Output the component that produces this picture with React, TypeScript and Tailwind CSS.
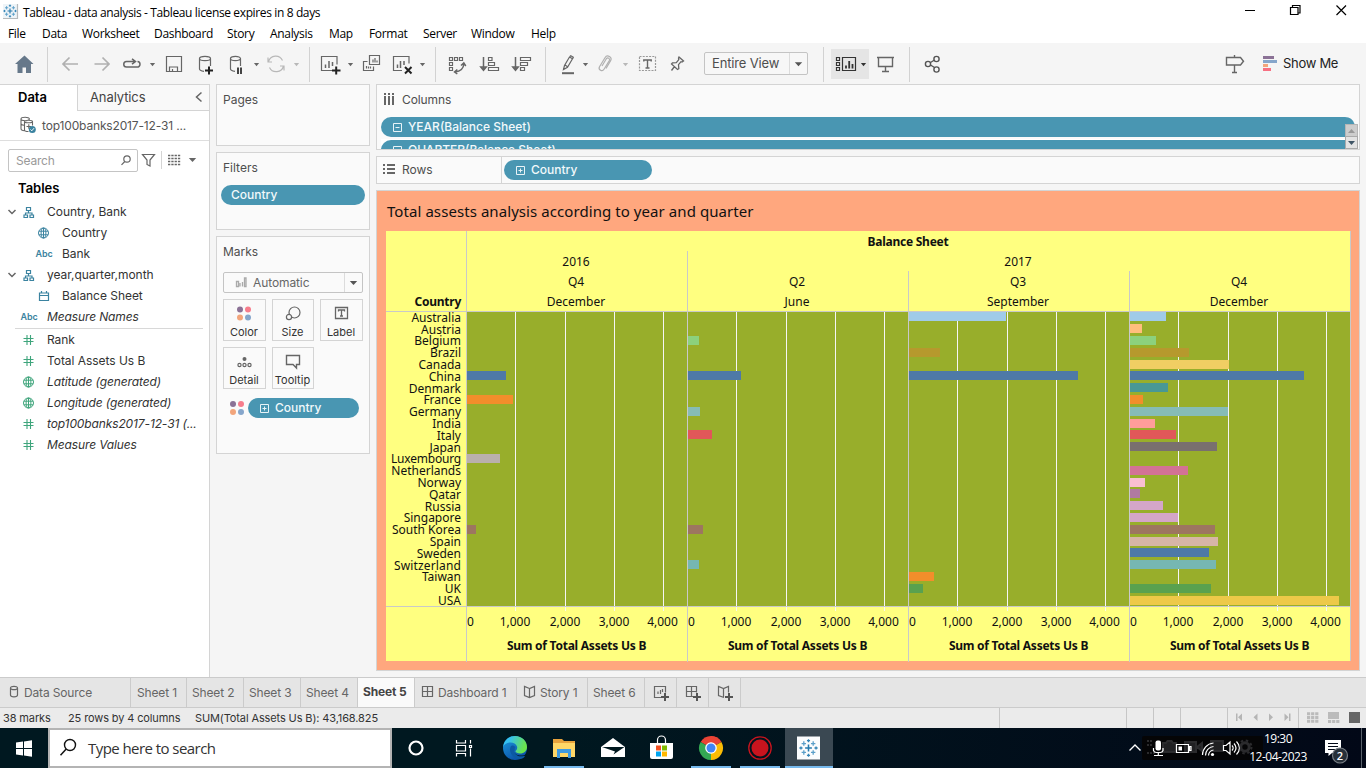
import React from "react";

type Kids = { children?: React.ReactNode };

/** Drawing whose user units are window coordinates. */
function Ico({ x, y, w, h, children, c = "#666666" }: Kids & { x: number; y: number; w: number; h: number; c?: string }) {
  return (
    <svg className="block shrink-0 overflow-visible" width={w} height={h} viewBox={`${x} ${y} ${w} ${h}`} fill="none" stroke={c} strokeWidth={1.2}>
      {children}
    </svg>
  );
}

const Caret = ({ x, y = 63, c = "#666666" }: { x: number; y?: number; c?: string }) => (
  <path d={`M${x - 2.6} ${y}h5.2l-2.6 3.2z`} fill={c} stroke="none" />
);

const Sep = () => <div className="mt-1 h-[35px] w-px shrink-0 bg-[#d2d2d2]" />;

function TableauMark({ x, y, s = 1 }: { x: number; y: number; s?: number }) {
  const plus = (cx: number, cy: number, r: number) => `M${cx - r} ${cy}h${2 * r}M${cx} ${cy - r}v${2 * r}`;
  return (
    <g transform={`translate(${x} ${y}) scale(${s})`} strokeWidth={1}>
      <path d={plus(0, 0, 2.6)} stroke="#2479ad" strokeWidth={1.2} />
      <path d={plus(-3.6, -3.4, 1.7) + plus(3.6, 3.4, 1.7) + plus(3.6, -3.4, 1.7) + plus(-3.6, 3.4, 1.7)} stroke="#5b9fc9" />
      <path d={plus(0, -5.6, 1.2) + plus(0, 5.6, 1.2) + plus(-5.8, 0, 1.2) + plus(5.8, 0, 1.2)} stroke="#3384b5" />
    </g>
  );
}

function TitleBar() {
  return (
    <header className="flex h-6 items-center bg-white text-black">
      <Ico x={0} y={0} w={23} h={24}>
        <path d="M3 4h15v14.500h-15z" fill="#eef4f8" stroke="none" />
        <path d="M3 18.500h14.500v-14.500" stroke="#b5babd" />
        <TableauMark x={10} y={11} s={0.95} />
      </Ico>
      <span className="pt-px font-['Open_Sans'] text-[12px] tracking-[-0.37px]">Tableau - data analysis - Tableau license expires in 8 days</span>
      <div className="grow" />
      <Ico x={1240} y={0} w={126} h={24} c="#000">
        <path d="M1245 10.5h10M1336.5 5.5l9.5 9.5M1346 5.500l-9.500 9.500" />
        <path d="M1290.500 7.500h7.500v7h-7.500zM1292.500 7.500v-2h7.500v7.500h-2" />
      </Ico>
    </header>
  );
}

function MenuBar() {
  return (
    <nav className="flex h-[19px] items-center bg-white pl-2 font-['Open_Sans'] text-[12px] tracking-[-0.32px] text-black">
      <span className="w-[34px]">File</span>
      <span className="w-10">Data</span>
      <span className="w-[72px]">Worksheet</span>
      <span className="w-[73px]">Dashboard</span>
      <span className="w-[43px]">Story</span>
      <span className="w-[59px]">Analysis</span>
      <span className="w-10">Map</span>
      <span className="w-[54px]">Format</span>
      <span className="w-12">Server</span>
      <span className="w-[60px]">Window</span>
      <span>Help</span>
    </nav>
  );
}

function Toolbar() {
  return (
    <div className="flex h-[41px] bg-[#f5f5f5] text-[#333]">
      <Ico x={0} y={43} w={47} h={41}>
        <path d="M24.500 55.500l9 8.500h-2.500v9h-5v-5.500h-3.500v5.500h-5v-9h-2.500z" fill="#66788a" stroke="none" />
      </Ico>
      <Sep />
      <Ico x={48} y={43} w={261} h={41}>
        <path d="M78 64H63M69.500 57.500L63 64l6.500 6.500M94.500 64H109M102.500 57.500l6.500 6.500-6.500 6.500" stroke="#b0b0b0" strokeWidth={1.7} />
        <path d="M135 61.500h-8.500a2.700 2.700 0 0 0 0 5.500h10.500a2.700 2.700 0 0 0 3-2.700c0-1.300-1-2.500-2.500-2.700M132 58.800l3.500 2.700-3.500 2.700" strokeWidth={1.5} />
        <Caret x={152.500} />
        <path d="M166.500 56.500h15v15h-15zM169.500 71.500v-4.500h8v4.500M172.500 69v2.500" />
        <path d="M199.500 58.500v10.500c0 1.300 2 2 4.500 2.300M210.500 58.500v7.500M199.500 58.500a5.500 2.200 0 1 1 11 0a5.500 2.200 0 1 1-11 0" />
        <path d="M205 70.500h8M209 66.500v8" stroke="#222" strokeWidth={2} />
        <path d="M230.500 58.500v10.500c0 1.300 2 2 4.500 2.300M240.500 58.500v7.500M230.500 58.500a5 2.200 0 1 1 10 0a5 2.200 0 1 1-10 0" />
        <path d="M238 67.500v6.500M241 67.500v6.500" stroke="#444" strokeWidth={2} />
        <Caret x={256.500} />
        <path d="M268.500 61.500a7.500 7.500 0 0 1 14-1M283.500 66a7.500 7.500 0 0 1-14 1.500M268 57.500v4.500h4M284 70.500v-4.500h-4" stroke="#b8b8b8" />
        <Caret x={296.500} c="#b8b8b8" />
      </Ico>
      <Sep />
      <Ico x={310} y={43} w={125} h={41}>
        <path d="M332 70.500h-10.500v-14h15.500v8" />
        <path d="M325.500 68v-3.500M329 68v-7M332.500 66v-4" strokeWidth={1.5} />
        <path d="M332 70.500h8.500M336.200 66.500v8" stroke="#222" strokeWidth={2} />
        <Caret x={350.500} />
        <path d="M369.500 55.500h10v9h-10zM367.500 61.500h-4v9h10v-4M373 62.500v-3M375 62.500v-4.500M377 62.500v-2M366.500 68.500v-2.500M368.500 68.500v-2M370.500 68.500v-2" />
        <path d="M402 70.500h-8.500v-14h15.500v7" />
        <path d="M397.500 68v-3.500M400.500 68v-7M404 65v-4" strokeWidth={1.500} />
        <path d="M405 67l6.500 6.500M411.500 67l-6.500 6.500" stroke="#222" strokeWidth={2} />
        <Caret x={422.500} />
      </Ico>
      <Sep />
      <Ico x={436} y={43} w={109} h={41}>
        <path d="M449.500 57.500h3v3h-3zM454.500 57.500h3v3h-3zM459.500 57.500h3v3h-3zM449.500 62.500h3v3h-3zM449.500 67.500h3v3h-3z" />
        <path d="M455 72c5-.5 8.500-3.500 8.800-8M457.300 69.500L454.500 72l2.800 2M461 65.500l2.800-2.500 2 3" strokeWidth={1.500} />
        <path d="M483.500 57v12M480.800 67l2.700 3.300 2.700-3.300zM515.500 57v12M512.800 67l2.700 3.300 2.700-3.300z" strokeWidth={1.500} />
        <path d="M488.500 57.500h3.500v3h-3.500zM488.500 62.500h6v3h-6zM488.500 67.500h10v3h-10zM520.500 57.500h10v3h-10zM520.500 62.500h7v3h-7zM520.500 67.500h4v3h-4z" />
      </Ico>
      <Sep />
      <Ico x={546} y={43} w={158} h={41}>
        <path d="M563.500 69.500l1-4 5-8.500 3 1.800-5 8.500zM565 65l3 2M570 56.500l.8-.8 2.500 1.500-.5 1.200" />
        <path d="M562 73.200h12" strokeWidth={2} />
        <Caret x={585.500} />
        <path d="M602 66l4.500-7.500a1.800 1.800 0 0 1 3 1.800l-5.500 9a2.600 2.600 0 0 1-4.500-2.600l5.500-9a3.200 3.200 0 0 1 5.500 3.300l-4.500 7.500" stroke="#b0b0b0" />
        <Caret x={625.500} c="#b8b8b8" />
        <rect x={639.500} y={56.500} width={16} height={14} stroke="#999" strokeDasharray="2 1.200" />
        <path d="M643.800 61.500v-1.500h7.400v1.500M647.500 60v8M645.500 68h4" stroke="#666" strokeWidth={1.400} />
        <path d="M679 57l4.500 4-1.500 1-1-.3-2.500 3 .3 4-1.300.8-6-5.500 1-1.200 3.800-.2 2.500-3-.3-1.500zM674.500 66.500l-3 4" strokeWidth={1.300} />
      </Ico>
      <div className="mt-[9px] flex h-[23px] w-[104px] shrink-0 items-center rounded-[2px] border border-[#c4c4c4] bg-[#f7f7f7]">
        <span className="w-[84px] pl-[7px] font-['Inter'] text-[13px] tracking-[-0.15px] text-[#4e4e4e]">Entire View</span>
        <span className="h-full w-px bg-[#dcdcdc]" />
        <Ico x={790} y={53} w={17} h={21}><path d="M794.800 62.200h7.400l-3.700 4z" fill="#555" stroke="none" /></Ico>
      </div>
      <div className="w-[15px]" />
      <Sep />
      <div className="ml-[7px] mt-1.5 h-[30px] w-[38px] bg-[#e5e5e5]">
        <Ico x={831} y={49} w={38} h={30} c="#333">
          <path d="M836.500 57.500h3v3h-3zM836.500 62.500h3v3h-3zM836.500 67.500h3v3h-3zM842.500 57.500h13v13h-13z" />
          <path d="M846 68.500v-3M849.200 68.500v-7.500M852.500 68.500v-4.500" strokeWidth={1.800} />
          <Caret x={863.500} c="#333" />
        </Ico>
      </div>
      <Ico x={869} y={43} w={40} h={41}>
        <path d="M877 57.500h17M878.500 57.500v9h14v-9M885.500 67v4.500M882 71.500h7" strokeWidth={1.400} />
      </Ico>
      <Sep />
      <Ico x={910} y={43} w={40} h={41} c="#555">
        <path d="M930.500 62.500l4-2.500M930.500 65l4 2.500" strokeWidth={1.400} />
        <circle cx={928} cy={64} r={2.600} strokeWidth={1.400} /><circle cx={936.500} cy={59} r={2.600} strokeWidth={1.400} /><circle cx={936.500} cy={69.500} r={2.600} strokeWidth={1.400} />
      </Ico>
      <div className="grow" />
      <Ico x={1220} y={43} w={63} h={41}>
        <path d="M1226.500 57.500h14l3 3.700-3 3.800h-14zM1234.500 55v2.500M1234.500 65v7M1232 72.500h5" strokeWidth={1.400} />
        <g stroke="none">
          <path d="M1263 56h11v3h-11z" fill="#8b7296" /><path d="M1263 60h14v3h-14z" fill="#86a6cb" />
          <path d="M1263 64h5v3h-5z" fill="#f2a57c" /><path d="M1263 68h8v3h-8z" fill="#f77082" />
        </g>
      </Ico>
      <div className="w-[83px] pt-[11px] font-['Inter'] text-[13px] leading-[18px] tracking-[-0.3px] text-[#222]">Show Me</div>
    </div>
  );
}

type Kind = "tree" | "globe" | "abc" | "cal" | "num";

function FieldIcon({ kind, green }: { kind: Kind; green?: boolean }) {
  const c = green ? "#3fa57c" : "#3b83a0";
  if (kind === "abc") return <span className="w-5 text-center text-[9px] font-semibold tracking-[-0.1px] text-[#3b83a0]">Abc</span>;
  return (
    <Ico x={-10} y={-8} w={20} h={16} c={c}>
      {kind === "tree" && <path d="M-2.500-4.500h4v3h-4zM-.5-1.500v2.500M-3.500 3v-2h6.500v2M-5 3h3.500v2.500h-3.500zM1 3h3.500v2.500h-3.500z" />}
      {kind === "globe" && <path d="M-.5-5a5 5 0 1 0 0 10a5 5 0 1 0 0-10M-.5-5a2.400 5 0 1 0 0 10a2.400 5 0 1 0 0-10M-5-1.800h9M-5 1.800h9M-.5-5v10" strokeWidth={1} />}
      {kind === "cal" && <path d="M-4.500-3h9v7.500h-9zM-4.500-.5h9M-2.500-5v2M2.500-5v2" />}
      {kind === "num" && <path d="M-5.500-1.500h10M-5.500 1.500h10M-2-5v10M1.500-5v10" strokeWidth={1.100} />}
    </Ico>
  );
}

function Field({ kind, green, italic, child, open, children }: Kids & { kind: Kind; green?: boolean; italic?: boolean; child?: boolean; open?: boolean }) {
  return (
    <div className={`flex h-[21px] items-center ${child ? "pl-[34px]" : open ? "pl-[6px]" : "pl-[19px]"}`}>
      {open && <Ico x={0} y={0} w={13} h={8}><path d="M2.500 2l3.500 3.500L9.500 2" strokeWidth={1.500} /></Ico>}
      <FieldIcon kind={kind} green={green} />
      <span className={`whitespace-nowrap pl-2 text-[12px] text-[#333] ${italic ? "italic tracking-[-0.12px]" : "tracking-[-0.04px]"}`}>{children}</span>
    </div>
  );
}

function DataPane() {
  return (
    <aside className="flex w-[210px] shrink-0 flex-col border-r border-t border-[#d4d4d4] bg-white font-['Inter']">
      <div className="flex h-[26px] text-[13px]">
        <div className="w-[77px] pt-[3px] pl-[18px] font-semibold leading-[19px] text-black">Data</div>
        <div className="flex grow items-start border-b border-l border-[#d4d4d4] bg-[#f9f9f9] pt-[3px] pl-3 leading-[19px] text-[#444]">
          <span className="w-[103px] tracking-[-0.1px]">Analytics</span>
          <Ico x={193} y={88} w={12} h={19}><path d="M201.500 92.500l-5 4.500 5 4.500" strokeWidth={1.500} /></Ico>
        </div>
      </div>
      <div className="flex h-[30px] items-center border-b border-[#dedede]">
        <Ico x={0} y={111} w={42} h={29}>
          <path d="M21 119v9.500c0 1.500 2 2.200 3.500 2.200M21 119a4.200 1.700 0 1 1 8.400 0a4.200 1.700 0 1 1-8.400 0M21 123.500c0 1 1 1.500 3 1.700M24.500 121.500a4 1.300 0 1 1 8 0a4 1.300 0 1 1-8 0v8.500c0 1 2 1.500 4 1.500M32.500 121.500v4M26.500 126.500h4.500M28.800 124.300v4.500" strokeWidth={1.100} />
          <circle cx={32.300} cy={129.500} r={3.500} fill="#3b83a0" stroke="none" /><path d="M30.500 129.500l1.300 1.300 2.200-2.600" stroke="#fff" strokeWidth={1} />
        </Ico>
        <span className="text-[12px] tracking-[-0.15px] text-[#555]">top100banks2017-12-31 ...</span>
      </div>
      <div className="flex pt-2 pl-2">
        <div className="flex h-[23px] w-[130px] items-center justify-between rounded-[2px] border border-[#c4c4c4] pl-[7px] text-[12px] text-[#999]">
          <span className="tracking-[-0.2px]">Search</span>
          <Ico x={116} y={150} w={20} h={21}><circle cx={126} cy={159} r={3.200} /><path d="M123.800 161.500l-3.300 3.300" /></Ico>
        </div>
        <Ico x={138} y={149} w={65} h={23}>
          <path d="M142.500 154.500h12l-4.500 5.500v6l-3-1.500v-4.500z" />
          <path d="M161.500 151v18" stroke="#d4d4d4" strokeWidth={1} />
          <path d="M168 155.500h12.500M168 158.500h12.500M168 161.500h12.500M168 164.500h12.500" strokeDasharray="2.300 1" strokeWidth={1.500} />
          <path d="M188.800 158h7.400l-3.700 4z" fill="#666" stroke="none" />
        </Ico>
      </div>
      <div className="mt-[7px] mb-[3px] pl-[18px] text-[13px] font-semibold leading-[19px] text-black">Tables</div>
      <Field kind="tree" open>Country, Bank</Field>
      <Field kind="globe" child>Country</Field>
      <Field kind="abc" child>Bank</Field>
      <Field kind="tree" open>year,quarter,month</Field>
      <Field kind="cal" child>Balance Sheet</Field>
      <Field kind="abc" italic>Measure Names</Field>
      <div className="mt-px mr-[6px] ml-[15px] h-px bg-[#d8d8d8]" />
      <Field kind="num" green>Rank</Field>
      <Field kind="num" green>Total Assets Us B</Field>
      <Field kind="globe" green italic>Latitude (generated)</Field>
      <Field kind="globe" green italic>Longitude (generated)</Field>
      <Field kind="num" green italic>top100banks2017-12-31 (...</Field>
      <Field kind="num" green italic>Measure Values</Field>
    </aside>
  );
}

const Box = ({ sign }: { sign: "plus" | "minus" }) => (
  <Ico x={0} y={0} w={9} h={9} c="#e8f3f7">
    <path d={sign === "plus" ? "M.5.5h8v8h-8zM2.500 4.500h4M4.500 2.500v4" : "M.5.5h8v8h-8zM2.500 4.500h4"} strokeWidth={1} />
  </Ico>
);

const Pill = ({ children, className }: Kids & { className: string }) => (
  <div className={`flex h-5 shrink-0 items-center rounded-full bg-[#4996b2] text-[12px] font-medium text-[#f2f9fb] ${className}`}>{children}</div>
);

const Card = ({ children, className }: Kids & { className: string }) => (
  <section className={`border border-[#d4d4d4] bg-[#fafafa] text-[12px] text-[#4e4e4e] ${className}`}>{children}</section>
);

const Dots = ({ x, y }: { x: number; y: number }) => (
  <g stroke="none">
    <circle cx={x - 4} cy={y - 4} r={3} fill="#8b7296" /><circle cx={x + 4} cy={y - 4} r={3} fill="#f77d8c" />
    <circle cx={x - 4} cy={y + 4} r={3} fill="#f2a57c" /><circle cx={x + 4} cy={y + 4} r={3} fill="#86a6cb" />
  </g>
);

function MarkButton({ label, children }: Kids & { label: string }) {
  return (
    <div className="flex h-[42px] flex-col items-center border border-[#d4d4d4] bg-[#fafafa] text-[11px] text-[#333]">
      <Ico x={-14} y={-13} w={28} h={25}>{children}</Ico>
      <span className="pr-px leading-[14px]">{label}</span>
    </div>
  );
}

function Shelves() {
  return (
    <div className="flex w-[166px] shrink-0 flex-col gap-1.5 pl-1.5 font-['Inter']">
      <Card className="h-[62px] w-[154px] pt-[7px] pl-1.5 leading-4">Pages</Card>
      <Card className="h-[78px] w-[154px] pt-[7px] leading-4">
        <div className="pl-1.5">Filters</div>
        <Pill className="mt-[9px] ml-1 w-36 pl-[10px]">Country</Pill>
      </Card>
      <Card className="h-[218px] w-[154px] px-1.5 pt-[7px] leading-4">
        <div>Marks</div>
        <div className="mt-[12px] flex h-[21px] w-[140px] items-center rounded-[2px] border border-[#c4c4c4] text-[#666]">
          <Ico x={224} y={273} w={29} h={19} c="#aaa"><path d="M236.500 281.500h2v5h-2zM240 286.500v-3.500M242.500 286.500v-4.500M244.500 278h1.500v8.500h-1.500z" strokeWidth={1.300} /></Ico>
          <span className="w-[91px] tracking-[-0.1px]">Automatic</span>
          <span className="h-full w-px bg-[#dcdcdc]" />
          <Ico x={345} y={273} w={17} h={19}><path d="M349.800 281h7.400l-3.700 4z" fill="#555" stroke="none" /></Ico>
        </div>
        <div className="mt-1.5 grid grid-cols-[43px_42px_43px] gap-1.5">
          <MarkButton label="Color"><Dots x={-1} y={0.500} /></MarkButton>
          <MarkButton label="Size"><circle cx={1.500} cy={-0.500} r={5.500} /><circle cx={-4} cy={4} r={2.600} fill="#fafafa" /></MarkButton>
          <MarkButton label="Label"><path d="M-6.500-5.500h12v11h-12zM-3.500-1.500v-1.500h6v1.500M-.5-3v6M-2 3h3" strokeWidth={1.300} /></MarkButton>
          <MarkButton label="Detail">
            <circle cx={-0.500} cy={-2} r={2} fill="#666" stroke="none" /><circle cx={-5.500} cy={4} r={1.600} /><circle cx={-0.500} cy={4} r={1.600} /><circle cx={4.500} cy={4} r={1.600} />
          </MarkButton>
          <MarkButton label="Tooltip"><path d="M-6.500-5.500h13v9h-3v3.500l-3.500-3.500h-6.500z" strokeWidth={1.400} /></MarkButton>
        </div>
        <div className="mt-[9px] flex">
          <Ico x={223} y={398} w={25} h={20}><Dots x={237} y={408} /></Ico>
          <Pill className="w-[111px] pl-3"><Box sign="plus" /><span className="pl-1.5">Country</span></Pill>
        </div>
      </Card>
    </div>
  );
}

const countries: [string, string][] = [
  ["Australia", "#a0cbe8"], ["Austria", "#ffbe7d"], ["Belgium", "#8cd17d"], ["Brazil", "#b6992d"], ["Canada", "#f1ce63"],
  ["China", "#4e79a7"], ["Denmark", "#499894"], ["France", "#f28e2b"], ["Germany", "#86bcb6"], ["India", "#ff9d9a"],
  ["Italy", "#e15759"], ["Japan", "#79706e"], ["Luxembourg", "#bab0ac"], ["Netherlands", "#d37295"], ["Norway", "#fabfd2"],
  ["Qatar", "#b07aa1"], ["Russia", "#d4a6c8"], ["Singapore", "#d4a6c8"], ["South Korea", "#9d7660"], ["Spain", "#d7b5a6"],
  ["Sweden", "#4e79a7"], ["Switzerland", "#76b7b2"], ["Taiwan", "#f28e2b"], ["UK", "#59a14f"], ["USA", "#edc948"],
];

const panes: { month: string; bars: Record<number, number> }[] = [
  { month: "December", bars: { 5: 39, 7: 46, 12: 33, 18: 9 } },
  { month: "June", bars: { 2: 11, 5: 53, 8: 12, 10: 24, 18: 15, 21: 11 } },
  { month: "September", bars: { 0: 97, 3: 31, 5: 169, 22: 25, 23: 14 } },
  {
    month: "December",
    bars: {
      0: 36, 1: 12, 2: 26, 3: 59, 4: 99, 5: 174, 6: 38, 7: 13, 8: 98, 9: 25, 10: 46, 11: 87, 13: 58, 14: 15, 15: 10, 16: 33,
      17: 48, 18: 85, 19: 88, 20: 79, 21: 86, 23: 81, 24: 209,
    },
  },
];

function Pane({ bars }: { bars: Record<number, number> }) {
  return (
    <div className="flex h-[350px] w-[221px] flex-col border-l border-[#c9c9c9]">
      <svg className="block" width={220} height={300} viewBox="0 0 220 300" shapeRendering="crispEdges">
        <rect width={220} height={294} fill="#98ae2b" />
        {[48, 98, 147, 196].map((x) => <rect key={x} x={x} width={1} height={299} fill="#f5f5f5" />)}
        {Object.entries(bars).map(([i, w]) => <rect key={i} x={0} y={Math.ceil(11.8 * +i)} width={w} height={9} fill={countries[+i][1]} />)}
        <rect y={294} width={220} height={1} fill="#c9c9c9" />
      </svg>
      <div className="flex h-5 text-[12px] leading-5">
        <span className="w-[23px]">0</span>
        <span className="w-[50px] text-center">1,000</span>
        <span className="w-[50px] text-center">2,000</span>
        <span className="w-[48px] text-center">3,000</span>
        <span className="w-[49px] text-center">4,000</span>
      </div>
      <div className="pt-[4px] pr-px text-center text-[12px] font-bold leading-5 tracking-[-0.25px]">Sum of Total Assets Us B</div>
    </div>
  );
}

function Chart() {
  return (
    <div className="flex h-[430px] w-[965px] border-r border-[#c9c9c9] bg-[#ffff80] font-['Noto_Sans'] text-[12px] text-[#111]">
      <div className="flex w-20 flex-col text-right">
        <div className="h-[81px] border-b border-[#c9c9c9] pt-[61px] pr-[5px] font-bold leading-5 tracking-[-0.25px]">Country</div>
        <div className="h-[294px] pr-[5px]">
          {countries.map(([name], i) => (
            <div
              key={name}
              className={`whitespace-nowrap leading-3 ${i % 5 === 1 ? "h-[11px]" : "h-3"} ${name === "Luxembourg" ? "tracking-[-0.2px]" : name === "Switzerland" ? "tracking-[0.15px]" : ""}`}
            >
              {name}
            </div>
          ))}
        </div>
        <div className="h-px bg-[#c9c9c9]" />
      </div>
      <div className="w-[884px]">
        <div className="h-5 border-l border-[#c9c9c9] pt-px pr-px text-center font-bold leading-5 tracking-[-0.25px]">Balance Sheet</div>
        <div className="flex h-5 text-center leading-[22px]">
          <div className="w-[221px] border-l border-[#c9c9c9] pr-0.5">2016</div>
          <div className="w-[663px] border-l border-[#c9c9c9] pr-0.5">2017</div>
        </div>
        <div className="flex h-[41px] border-b border-[#c9c9c9] text-center leading-5">
          {panes.map((p, i) => (
            <div key={i} className="w-[221px] border-l border-[#c9c9c9] pt-px pr-0.5">
              <div>{["Q4", "Q2", "Q3", "Q4"][i]}</div>
              <div>{p.month}</div>
            </div>
          ))}
        </div>
        <div className="flex">{panes.map((p, i) => <Pane key={i} bars={p.bars} />)}</div>
      </div>
    </div>
  );
}

function Worksheet() {
  return (
    <main className="flex w-[984px] shrink-0 flex-col gap-1.5 font-['Inter']">
      <Card className="flex h-[66px] pl-1">
        <div className="w-[964px] overflow-hidden">
          <div className="flex h-8 items-center pb-0.5 pl-0.5">
            <Ico x={383} y={92} w={19} h={16}><path d="M385 93v2M389 93v2M393 93v2M385 96v9M389 96v9M393 96v9" strokeWidth={2} /></Ico>
            <span className="tracking-[-0.1px]">Columns</span>
          </div>
          <div className="flex w-[974px] flex-col gap-[3px] bg-linear-to-b from-transparent from-50% to-white to-50%">
            <Pill className="w-[974px] pl-3"><Box sign="minus" /><span className="pl-1.5">YEAR(Balance Sheet)</span></Pill>
            <Pill className="w-[974px] pl-3"><Box sign="minus" /><span className="pl-1.5">QUARTER(Balance Sheet)</span></Pill>
          </div>
        </div>
        <div className="w-[10px]">
          <div className="h-8" />
          <svg className="block" width={13} height={32} viewBox="1345 117 13 32">
            <path d="M1345 117a10 10 0 0 1 9.500 7h-9.500z" fill="#4996b2" />
            <rect x={1345.500} y={124.500} width={12} height={12} fill="#cdcdcd" stroke="#b5b5b5" />
            <rect x={1345.500} y={136.500} width={12} height={12} fill="#e3e3e3" stroke="#aaa" />
            <path d="M1348 133h7l-3.500-4z" fill="#999" /><path d="M1348 141h7l-3.500 4z" fill="#3f5566" />
          </svg>
        </div>
      </Card>
      <Card className="flex h-7 items-center">
        <div className="flex h-full w-[125px] items-center border-r border-[#d4d4d4] pl-1.5">
          <Ico x={383} y={162} w={19} h={16}><path d="M383 165h2M383 169h2M383 173h2M387 165h8M387 169h8M387 173h8" strokeWidth={2} /></Ico>
          <span>Rows</span>
        </div>
        <Pill className="ml-0.5 w-[148px] pl-3"><Box sign="plus" /><span className="pl-1.5">Country</span></Pill>
      </Card>
      <section className="h-[481px] border border-[#d4d4d4] bg-[#ffa77e] pl-[9px]">
        <h1 className="h-10 pl-px font-['Noto_Sans'] text-[15px] leading-10 tracking-[0.07px] text-[#111]">Total assests analysis according to year and quarter</h1>
        <Chart />
      </section>
    </main>
  );
}

const Tab = ({ children, className }: Kids & { className: string }) => (
  <div className={`flex h-full shrink-0 items-center border-r border-[#cbcbcb] ${className}`}>{children}</div>
);

const Plus = ({ x, y }: { x: number; y: number }) => <path d={`M${x - 4} ${y}h8M${x} ${y - 4}v8`} strokeWidth={2} stroke="#555" />;

function SheetTabs() {
  return (
    <div className="flex h-[31px] border-y border-[#cbcbcb] bg-[#e5e5e5] font-['Inter'] text-[12px] tracking-[-0.15px] text-[#666]">
      <Tab className="w-[131px]">
        <Ico x={0} y={678} w={24} h={29}><path d="M10.500 688v7c0 2.500 7 2.500 7 0v-7M10.500 688a3.500 1.700 0 1 1 7 0a3.500 1.700 0 1 1-7 0" /></Ico>Data Source
      </Tab>
      <Tab className="w-14 pl-1.5">Sheet 1</Tab>
      <Tab className="w-[57px] pl-[5px]">Sheet 2</Tab>
      <Tab className="w-[57px] pl-[5px]">Sheet 3</Tab>
      <Tab className="w-[57px] pl-[5px]">Sheet 4</Tab>
      <Tab className="w-[57px] bg-[#fafafa] pl-[5px] pb-px font-bold text-[#444]">Sheet 5</Tab>
      <Tab className="w-[102px]">
        <Ico x={415} y={678} w={23} h={29}><path d="M422.500 686.500h10v10h-10zM427.500 686.500v10M422.500 691.500h10" /></Ico>Dashboard 1
      </Tab>
      <Tab className="w-[71px]">
        <Ico x={517} y={678} w={23} h={29}><path d="M529.500 688.500l-5-2v9l5 2 5-2v-9zM529.500 688.500v9" /></Ico>Story 1
      </Tab>
      <Tab className="w-[57px] pl-[5px]">Sheet 6</Tab>
      <Tab className="w-8"><Ico x={645} y={678} w={31} h={29}><path d="M661 697.500h-6.500v-11h11v6M658 694v-2.500M660.500 694v-4M662.500 692v-3" /><Plus x={665} y={697} /></Ico></Tab>
      <Tab className="w-8"><Ico x={677} y={678} w={31} h={29}><path d="M694 696.500h-7.500v-10h10v6M691.500 686.500v10M686.500 691.500h10" /><Plus x={697} y={697} /></Ico></Tab>
      <Tab className="w-8"><Ico x={709} y={678} w={31} h={29}><path d="M724 697.500l-5.500-2v-9l5 2 5-2v6M723.500 688.500v9" /><Plus x={729} y={697} /></Ico></Tab>
    </div>
  );
}

function StatusBar() {
  return (
    <div className="flex h-5 items-center bg-[#ebebeb] pl-[3px] font-['Inter'] text-[11px] tracking-[-0.12px] text-[#333]">
      <span className="w-[65px]">38 marks</span>
      <span className="w-[127px]">25 rows by 4 columns</span>
      <span>SUM(Total Assets Us B): 43,168.825</span>
      <div className="grow" />
      <Ico x={995} y={708} w={371} h={20} c="#c6c6c6">
        <path d="M999.500 708v20M1126.500 708v20M1153.500 708v20M1180.500 708v20M1227.500 708v20M1298.500 708v20" strokeWidth={1} />
        <path d="M1236 713.500h1.500v7.500h-1.500zM1242 713.500v7.500l-4-3.700zM1257.500 713.500v7.500l-4-3.700zM1269 713.500v7.500l4-3.700zM1284.500 713.500v7.500l4-3.700zM1289 713.500h1.500v7.500h-1.500z" fill="#b5b5b5" stroke="none" />
        <path d="M1307 713.700h12M1307 717.500h12M1307 721.300h12" stroke="#bbb" strokeWidth={3} strokeDasharray="3.200 .9" />
        <path d="M1328 712h11v7h-11z" fill="#bbb" stroke="none" /><path d="M1328 721.500h11.500" stroke="#bbb" strokeWidth={3} strokeDasharray="3.200 .9" />
        <path d="M1349 712h11v11h-11z" fill="#666" stroke="none" />
      </Ico>
    </div>
  );
}

function Taskbar() {
  return (
    <footer className="flex h-10 bg-linear-to-r from-[#001820] from-40% to-[#020817] font-['Open_Sans'] text-white">
      <Ico x={0} y={728} w={48} h={40}>
        <path d="M16 742.500l7-1v6.500h-7zM24 741.400l8-1.200v7.800h-8zM16 749h7v6.500l-7-1zM24 749h8v7.800l-8-1.200z" fill="#fff" stroke="none" />
      </Ico>
      <div className="flex h-10 w-[344px] items-center border-2 border-[#b4b4b4] bg-white">
        <Ico x={50} y={730} w={38} h={36} c="#111"><circle cx={70} cy={745} r={5.500} strokeWidth={1.400} /><path d="M66 749.300l-5.500 6" strokeWidth={1.500} /></Ico>
        <span className="text-[15px] tracking-[-0.56px] text-[#333]">Type here to search</span>
      </div>
      <Ico x={392} y={728} w={393} h={40} c="#fff">
        <defs>
          <linearGradient id="edgeA" x1="0" y1="0" x2="1" y2="0.300"><stop offset="0.300" stopColor="#35c1f1" /><stop offset="1" stopColor="#6be34b" /></linearGradient>
          <linearGradient id="edgeB" x1="0" y1="0" x2="0.600" y2="1"><stop offset="0" stopColor="#1c9de0" /><stop offset="1" stopColor="#0b4fa5" /></linearGradient>
        </defs>
        <circle cx={416} cy={748} r={6.500} strokeWidth={2.200} />
        <path d="M456.500 740v3h9v-3M456.500 756.500v-3h9v3M456.500 745.500h9v5.500h-9zM470.500 740v3.500M470.500 748.500v8M469.500 745.500h2v2h-2z" strokeWidth={1.200} />
        <g stroke="none">
          <circle cx={515} cy={748} r={12} fill="url(#edgeB)" />
          <path d="M503 747c1-7 6-11 12-11 7 0 12 5 12 11 0 4-3 6.500-7 6.500-3 0-5-1.300-4.500-2.500 1.500-1.500 2-3 1.500-4.500-1-3-4.500-4.500-7.500-4-3 .3-5.500 2-6.500 4.500z" fill="url(#edgeA)" />
          <path d="M511 746c-3 5 1 12 8 13 3 .3 5.500-1.500 7-4-6 3-12.500.5-12-5 .2-2 1.500-3 1.500-3-1.500-1.500-3.500-2-4.500-1z" fill="#0c59a4" />
          <path d="M515.500 747.500c-2 1.500-2.500 5.500 2 7.500 3 1 6.500.7 9.500-1l-1 2.500-2-.5c-3 .5-6 .5-8-1.500-2.500-2-2.500-5-.5-7z" fill="#00181f" />
          <path d="M553 739h9l2 2h11v16h-22z" fill="#e8a33d" /><path d="M553 743h22v14h-22z" fill="#ffd767" />
          <path d="M557 749h14v9h-3v-5h-8v5h-3z" fill="#3f9ae0" />
          <path d="M601 747l12-9 12 9v10h-24z" fill="#fff" /><path d="M602 747h22.500l-11 7.500 1.500-3z" fill="#00181f" />
          <path d="M650 743h23v14a2 2 0 0 1-2 2h-19a2 2 0 0 1-2-2z" fill="#fff" />
          <path d="M656 745.500h5v5h-5z" fill="#f25022" /><path d="M662 745.500h5v5h-5z" fill="#7fba00" /><path d="M656 751.500h5v5h-5z" fill="#00a4ef" /><path d="M662 751.500h5v5h-5z" fill="#ffb900" />
          <path d="M711 748L700.600 742A12 12 0 0 1 721.400 742z" fill="#ea4335" /><path d="M711 736a12 12 0 0 1 10.400 6H711z" fill="#ea4335" />
          <path d="M711 748L721.400 742A12 12 0 0 1 711 760z" fill="#fbbc05" /><path d="M711 748v12A12 12 0 0 1 700.600 742z" fill="#34a853" />
          <circle cx={711} cy={748} r={5.800} fill="#fff" /><circle cx={711} cy={748} r={4.500} fill="#4285f4" />
          <circle cx={760} cy={748} r={8.500} fill="#c8141e" />
          <path d="M544 766h40v2h-40zM691 766h40v2h-40zM740 766h40v2h-40z" fill="#76b9ed" />
        </g>
        <path d="M657.500 743v-3a4 4 0 0 1 8 0v3" strokeWidth={1.200} />
        <circle cx={760} cy={748} r={11.200} stroke="#c8141e" strokeWidth={1.300} />
      </Ico>
      <div className="h-10 w-12 border-b-2 border-[#76b9ed] bg-[#3a4852]">
        <Ico x={785} y={728} w={48} h={38}>
          <rect x={797} y={736.500} width={23} height={23} fill="#fbfcfd" stroke="none" />
          <TableauMark x={808.500} y={748} s={1.300} />
        </Ico>
      </div>
      <div className="grow" />
      <Ico x={1120} y={728} w={130} h={40} c="#fff">
        <path d="M1129.500 750.500l5.500-5.500 5.500 5.500" strokeWidth={1.400} />
        <rect x={1142} y={736} width={121} height={24} rx={2} fill="#050506" stroke="none" />
        <g stroke="#2b2b2d" strokeWidth={2}>
          <path d="M1163 743h3l1.500-2h4l1.500 2h3v9h-13zM1185 742h11v10h-11zM1197 747l5-4v8zM1211 741h12v10h-12z" fill="#202022" />
          <path d="M1147 741h6M1147 745h5M1147 753h8" strokeDasharray="2 1" />
          <circle cx={1245} cy={747} r={4.200} strokeWidth={3} /><circle cx={1245} cy={747} r={6.500} strokeDasharray="2.500 2.600" />
        </g>
        <rect x={1155.500} y={740.500} width={5.500} height={10} rx={2} fill="#fff" stroke="none" />
        <path d="M1153.500 748v2.500a3 3 0 0 0 3 2h3.500a3 3 0 0 0 3-2V748M1158.300 753v3M1154 755.500h9" />
        <path d="M1176.500 744.500h12v8h-12zM1189.500 746.500h1.500v4h-1.500z" /><path d="M1178.500 746.500h3.500v4h-3.500z" fill="#fff" stroke="none" />
        <path d="M1202.500 755a12 12 0 0 1 11-12M1205.500 755.500a9 9 0 0 1 8-9M1208.500 755.500a6 6 0 0 1 5-5.500" strokeWidth={1.200} /><circle cx={1212.500} cy={754.500} r={1.600} fill="#fff" stroke="none" />
        <path d="M1223.500 745.500h2.500l4-3.500v12l-4-3.500h-2.500zM1232 745.500c1.500 1.500 1.500 3.500 0 5M1234 743.500c2.700 3 2.700 6 0 9M1236.500 741.500c3.700 4 3.700 9 0 13" />
      </Ico>
      <div className="flex w-[57px] flex-col items-center justify-center text-[12px] leading-[18px] tracking-[-0.5px]">
        <span className="pr-px">19:30</span>
        <span className="whitespace-nowrap pr-px">12-04-2023</span>
      </div>
      <Ico x={1307} y={728} w={59} h={40} c="#fff">
        <path d="M1325 740h16v13h-9l-3.500 3v-3h-3.500z" fill="#fff" stroke="none" />
        <path d="M1328 743.500h10M1328 746.500h10M1328 749.500h7" stroke="#020817" strokeWidth={1.200} />
        <circle cx={1340} cy={755.500} r={7.500} fill="#27303a" stroke="#777d84" />
        <text x={1340} y={759.500} fill="#fff" stroke="none" textAnchor="middle" className="text-[11px] font-semibold">2</text>
        <path d="M1361.500 728v40" stroke="#59616a" strokeWidth={1} />
      </Ico>
    </footer>
  );
}

export default function App() {
  return (
    <div className="flex h-[768px] w-[1366px] flex-col overflow-hidden bg-[#f5f5f5]">
      <TitleBar />
      <MenuBar />
      <Toolbar />
      <div className="flex h-[593px]">
        <DataPane />
        <Shelves />
        <Worksheet />
      </div>
      <SheetTabs />
      <StatusBar />
      <Taskbar />
    </div>
  );
}
